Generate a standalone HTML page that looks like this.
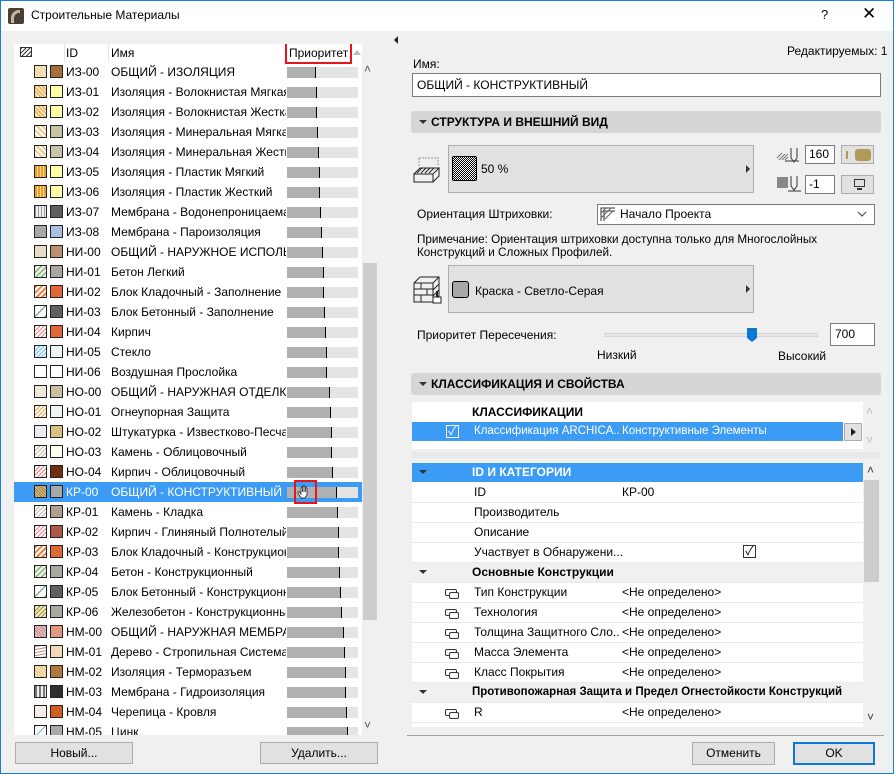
<!DOCTYPE html>
<html><head><meta charset="utf-8">
<style>
*{box-sizing:border-box;margin:0;padding:0}
body{width:894px;height:774px;overflow:hidden;background:#f0f0f0;font-family:"Liberation Sans","Noto Sans CJK SC",sans-serif;font-size:12px;color:#000;position:relative}
.abs{position:absolute}
#frame{position:absolute;left:0;top:0;width:894px;height:774px;border:1px solid #1a7fd4;pointer-events:none}
#title{position:absolute;left:0;top:0;width:894px;height:31px;background:#fff}
#list{position:absolute;left:14px;top:44px;width:348px;height:691px;background:#fff;overflow:hidden}
.r{position:absolute;left:0;width:348px;height:20px}
.r.sel{background:#3c9bf5;color:#fff}
.a,.b{position:absolute;top:3px;width:13px;height:13px;border:1px solid #222}
.a{left:20px}.b{left:36px}
.id{position:absolute;left:52px;top:3px}
.n{position:absolute;left:97px;top:3px;width:175px;white-space:nowrap;overflow:hidden}
.p{position:absolute;left:273px;top:5px;width:71px;height:11px;background:#e4e4e4}
.p u{position:absolute;left:0;top:0;height:11px;background:#b0b0b0;border-right:1px solid #000}
.btn{position:absolute;background:#e1e1e1;border:1px solid #adadad;text-align:center;line-height:20px}
.inp{position:absolute;background:#fff;border:1px solid #7a7a7a;padding-left:4px;line-height:19px}
.sec{position:absolute;left:411px;width:470px;height:22px;background:#d6d6d6;border-radius:3px;font-weight:bold;line-height:22px;padding-left:20px}
.sec:before{content:"";position:absolute;left:8px;top:9px;border-left:4px solid transparent;border-right:4px solid transparent;border-top:4px solid #333}
.pr{position:absolute;left:412px;width:451px;height:20px;background:#fff;border-bottom:1px solid #eaeaea;line-height:19px}
.pr .k{position:absolute;left:62px;white-space:nowrap}
.pr .v{position:absolute;left:210px}
.pr.g{background:#f0f0f0;font-weight:bold}
.pr.g:before{content:"";position:absolute;left:7px;top:7px;border-left:4px solid transparent;border-right:4px solid transparent;border-top:4px solid #333}
.lk{position:absolute;left:33px;top:6px;width:12px;height:7px;border:1.5px solid #333;border-radius:2px}
.lk:after{content:"";position:absolute;left:3px;top:2px;width:8px;height:5px;border:1.5px solid #333;border-radius:2px;background:#fff}
.cb{position:absolute;width:13px;height:13px;border:1px solid #333;background:#fff;font-size:12px;line-height:11px;text-align:center}
</style></head><body>
<div id="title">
 <div class="abs" style="left:8px;top:8px;width:16px;height:16px;background:#4a3f35;border-radius:2px"><div class="abs" style="left:3px;top:2px;width:9px;height:13px;border-left:3px solid #c8b898;border-top:3px solid #c8b898;border-radius:8px 0 0 0"></div></div>
 <div class="abs" style="left:31px;top:8px;font-size:12px">Строительные Материалы</div>
 <div class="abs" style="left:821px;top:7px;font-size:13px">?</div>
 <div class="abs" style="left:862px;top:4px;font-size:17px">✕</div>
</div>

<div id="list">
 <div class="abs" style="left:0;top:0;width:348px;height:18px;background:#fff"></div>
 <div class="abs" style="left:6px;top:3px;width:12px;height:10px;border:1px solid #333;background:repeating-linear-gradient(135deg,#333 0 1px,#fff 1px 3px)"></div>
 <div class="abs" style="left:52px;top:2px">ID</div>
 <div class="abs" style="left:97px;top:2px">Имя</div>
 <div class="abs" style="left:50px;top:0;width:1px;height:18px;background:#e5e5e5"></div>
 <div class="abs" style="left:94px;top:0;width:1px;height:18px;background:#e5e5e5"></div>
 <div class="abs" style="left:271px;top:-2px;width:67px;height:22px;border:2px solid #e8141c"></div>
 <div class="abs" style="left:275px;top:2px">Приоритет</div>
 <div class="abs" style="left:339px;top:6px;border-left:4px solid transparent;border-right:4px solid transparent;border-bottom:5px solid #bbb"></div>

 <div class="r" style="top:18px"><i class="a" style="background:repeating-linear-gradient(45deg,#f5c070 0 1px,#fff 1px 2px)"></i><i class="b" style="background:#a87038"></i><span class="id">ИЗ-00</span><span class="n">ОБЩИЙ - ИЗОЛЯЦИЯ</span><b class="p"><u style="width:29px"></u></b></div>
 <div class="r" style="top:38px"><i class="a" style="background:repeating-linear-gradient(45deg,#f0b860 0 2px,#fff 2px 3px)"></i><i class="b" style="background:#ffffa8"></i><span class="id">ИЗ-01</span><span class="n">Изоляция - Волокнистая Мягкая</span><b class="p"><u style="width:30px"></u></b></div>
 <div class="r" style="top:58px"><i class="a" style="background:repeating-linear-gradient(45deg,#f0b860 0 2px,#fff 2px 3px)"></i><i class="b" style="background:#ffffa8"></i><span class="id">ИЗ-02</span><span class="n">Изоляция - Волокнистая Жесткая</span><b class="p"><u style="width:30px"></u></b></div>
 <div class="r" style="top:78px"><i class="a" style="background:repeating-linear-gradient(45deg,#f0c890 0 2px,#fff 2px 4px)"></i><i class="b" style="background:#c8c4a8"></i><span class="id">ИЗ-03</span><span class="n">Изоляция - Минеральная Мягкая</span><b class="p"><u style="width:31px"></u></b></div>
 <div class="r" style="top:98px"><i class="a" style="background:repeating-linear-gradient(45deg,#f0c890 0 2px,#fff 2px 4px)"></i><i class="b" style="background:#c8c4a8"></i><span class="id">ИЗ-04</span><span class="n">Изоляция - Минеральная Жесткая</span><b class="p"><u style="width:32px"></u></b></div>
 <div class="r" style="top:118px"><i class="a" style="background:repeating-linear-gradient(90deg,#e8a030 0 2px,#f8d890 2px 3px)"></i><i class="b" style="background:#ffffa8"></i><span class="id">ИЗ-05</span><span class="n">Изоляция - Пластик Мягкий</span><b class="p"><u style="width:33px"></u></b></div>
 <div class="r" style="top:138px"><i class="a" style="background:repeating-linear-gradient(90deg,#e8a030 0 2px,#f8d890 2px 3px)"></i><i class="b" style="background:#ffffa8"></i><span class="id">ИЗ-06</span><span class="n">Изоляция - Пластик Жесткий</span><b class="p"><u style="width:33px"></u></b></div>
 <div class="r" style="top:158px"><i class="a" style="background:repeating-linear-gradient(90deg,#999 0 1px,#eee 1px 3px)"></i><i class="b" style="background:#606060"></i><span class="id">ИЗ-07</span><span class="n">Мембрана - Водонепроницаемая</span><b class="p"><u style="width:34px"></u></b></div>
 <div class="r" style="top:178px"><i class="a" style="background:#a8a8a8"></i><i class="b" style="background:#a8c0e0"></i><span class="id">ИЗ-08</span><span class="n">Мембрана - Пароизоляция</span><b class="p"><u style="width:35px"></u></b></div>
 <div class="r" style="top:198px"><i class="a" style="background:#e8dcc8"></i><i class="b" style="background:#b89070"></i><span class="id">НИ-00</span><span class="n">ОБЩИЙ - НАРУЖНОЕ ИСПОЛЬЗОВАНИЕ</span><b class="p"><u style="width:36px"></u></b></div>
 <div class="r" style="top:218px"><i class="a" style="background:repeating-linear-gradient(135deg,#70a060 0 1px,#e8f0e0 1px 4px)"></i><i class="b" style="background:#a8a8a0"></i><span class="id">НИ-01</span><span class="n">Бетон Легкий</span><b class="p"><u style="width:37px"></u></b></div>
 <div class="r" style="top:238px"><i class="a" style="background:repeating-linear-gradient(135deg,#f08040 0 2px,#fff 2px 4px)"></i><i class="b" style="background:#e06838"></i><span class="id">НИ-02</span><span class="n">Блок Кладочный - Заполнение</span><b class="p"><u style="width:37px"></u></b></div>
 <div class="r" style="top:258px"><i class="a" style="background:repeating-linear-gradient(135deg,#60a060 0 1px,#fff 1px 7px)"></i><i class="b" style="background:#606060"></i><span class="id">НИ-03</span><span class="n">Блок Бетонный - Заполнение</span><b class="p"><u style="width:38px"></u></b></div>
 <div class="r" style="top:278px"><i class="a" style="background:repeating-linear-gradient(135deg,#f08080 0 1px,#fff 1px 3px)"></i><i class="b" style="background:#e06838"></i><span class="id">НИ-04</span><span class="n">Кирпич</span><b class="p"><u style="width:39px"></u></b></div>
 <div class="r" style="top:298px"><i class="a" style="background:repeating-linear-gradient(135deg,#80c0f0 0 1px,#e8f4fc 1px 3px)"></i><i class="b" style="background:#f0f4f0"></i><span class="id">НИ-05</span><span class="n">Стекло</span><b class="p"><u style="width:40px"></u></b></div>
 <div class="r" style="top:318px"><i class="a" style="background:#fff"></i><i class="b" style="background:#fff"></i><span class="id">НИ-06</span><span class="n">Воздушная Прослойка</span><b class="p"><u style="width:40px"></u></b></div>
 <div class="r" style="top:338px"><i class="a" style="background:#eee8d8"></i><i class="b" style="background:#c8c0a0"></i><span class="id">НО-00</span><span class="n">ОБЩИЙ - НАРУЖНАЯ ОТДЕЛКА</span><b class="p"><u style="width:43px"></u></b></div>
 <div class="r" style="top:358px"><i class="a" style="background:repeating-linear-gradient(135deg,#f0a040 0 1px,#fff 1px 3px)"></i><i class="b" style="background:#f0f4f0"></i><span class="id">НО-01</span><span class="n">Огнеупорная Защита</span><b class="p"><u style="width:44px"></u></b></div>
 <div class="r" style="top:378px"><i class="a" style="background:#ecebf2"></i><i class="b" style="background:#d8c080"></i><span class="id">НО-02</span><span class="n">Штукатурка - Известково-Песчаная</span><b class="p"><u style="width:45px"></u></b></div>
 <div class="r" style="top:398px"><i class="a" style="background:repeating-linear-gradient(135deg,#c8b8a8 0 1px,#fff 1px 3px)"></i><i class="b" style="background:#fffff0"></i><span class="id">НО-03</span><span class="n">Камень - Облицовочный</span><b class="p"><u style="width:45px"></u></b></div>
 <div class="r" style="top:418px"><i class="a" style="background:repeating-linear-gradient(135deg,#f08080 0 1px,#fff 1px 3px)"></i><i class="b" style="background:#703010"></i><span class="id">НО-04</span><span class="n">Кирпич - Облицовочный</span><b class="p"><u style="width:46px"></u></b></div>
 <div class="r sel" style="top:438px"><i class="a" style="background:repeating-linear-gradient(45deg,#a08040 0 1px,#e0c890 1px 2px)"></i><i class="b" style="background:#a8a8a8"></i><span class="id">КР-00</span><span class="n">ОБЩИЙ - КОНСТРУКТИВНЫЙ</span><b class="p"><u style="width:50px"></u></b><div class="abs" style="left:280px;top:-2px;width:23px;height:24px;border:2px solid #e8141c"></div><svg class="abs" style="left:283px;top:2px" width="17" height="16" viewBox="0 0 17 16"><path d="M4 14L1 9c-.5-1 .8-1.8 1.5-1L4 10V4c0-1 1.5-1 1.5 0v4V2.5c0-1 1.5-1 1.5 0V8V3c0-1 1.5-1 1.5 0v5V4.5c0-1 1.5-1 1.5 0V11l-2 3z" fill="#fff" stroke="#333" stroke-width="0.9"/></svg></div>
 <div class="r" style="top:458px"><i class="a" style="background:repeating-linear-gradient(135deg,#c8b8a8 0 1px,#fff 1px 3px)"></i><i class="b" style="background:#b0a090"></i><span class="id">КР-01</span><span class="n">Камень - Кладка</span><b class="p"><u style="width:51px"></u></b></div>
 <div class="r" style="top:478px"><i class="a" style="background:repeating-linear-gradient(135deg,#f08080 0 1px,#fff 1px 3px)"></i><i class="b" style="background:#b05848"></i><span class="id">КР-02</span><span class="n">Кирпич - Глиняный Полнотелый</span><b class="p"><u style="width:52px"></u></b></div>
 <div class="r" style="top:498px"><i class="a" style="background:repeating-linear-gradient(135deg,#f08040 0 2px,#fff 2px 4px)"></i><i class="b" style="background:#e06838"></i><span class="id">КР-03</span><span class="n">Блок Кладочный - Конструкционный</span><b class="p"><u style="width:52px"></u></b></div>
 <div class="r" style="top:518px"><i class="a" style="background:repeating-linear-gradient(135deg,#70a060 0 1px,#e8f0e0 1px 4px)"></i><i class="b" style="background:#a8a8a0"></i><span class="id">КР-04</span><span class="n">Бетон - Конструкционный</span><b class="p"><u style="width:53px"></u></b></div>
 <div class="r" style="top:538px"><i class="a" style="background:repeating-linear-gradient(135deg,#60a060 0 1px,#fff 1px 7px)"></i><i class="b" style="background:#606060"></i><span class="id">КР-05</span><span class="n">Блок Бетонный - Конструкционный</span><b class="p"><u style="width:54px"></u></b></div>
 <div class="r" style="top:558px"><i class="a" style="background:repeating-linear-gradient(135deg,#a09030 0 1px,#f0ecc8 1px 3px)"></i><i class="b" style="background:#a8a8a0"></i><span class="id">КР-06</span><span class="n">Железобетон - Конструкционный</span><b class="p"><u style="width:55px"></u></b></div>
 <div class="r" style="top:578px"><i class="a" style="background:repeating-linear-gradient(45deg,#c08080 0 1px,#f0dcdc 1px 2px)"></i><i class="b" style="background:#e09880"></i><span class="id">НМ-00</span><span class="n">ОБЩИЙ - НАРУЖНАЯ МЕМБРАНА</span><b class="p"><u style="width:57px"></u></b></div>
 <div class="r" style="top:598px"><i class="a" style="background:repeating-linear-gradient(170deg,#c09080 0 1px,#fff 1px 3px)"></i><i class="b" style="background:#f0d8b8"></i><span class="id">НМ-01</span><span class="n">Дерево - Стропильная Система</span><b class="p"><u style="width:58px"></u></b></div>
 <div class="r" style="top:618px"><i class="a" style="background:repeating-linear-gradient(45deg,#f0b050 0 1px,#fff 1px 2px)"></i><i class="b" style="background:#b07840"></i><span class="id">НМ-02</span><span class="n">Изоляция - Терморазъем</span><b class="p"><u style="width:59px"></u></b></div>
 <div class="r" style="top:638px"><i class="a" style="background:repeating-linear-gradient(90deg,#777 0 2px,#eee 2px 4px)"></i><i class="b" style="background:#303030"></i><span class="id">НМ-03</span><span class="n">Мембрана - Гидроизоляция</span><b class="p"><u style="width:59px"></u></b></div>
 <div class="r" style="top:658px"><i class="a" style="background:#f8ece6"></i><i class="b" style="background:#d06020"></i><span class="id">НМ-04</span><span class="n">Черепица - Кровля</span><b class="p"><u style="width:60px"></u></b></div>
 <div class="r" style="top:678px"><i class="a" style="background:repeating-linear-gradient(135deg,#80b0e0 0 1px,#fff 1px 7px)"></i><i class="b" style="background:#a8a8a8"></i><span class="id">НМ-05</span><span class="n">Цинк</span><b class="p"><u style="width:61px"></u></b></div>
</div>
<!-- left scrollbar -->
<div class="abs" style="left:362px;top:62px;width:16px;height:673px;background:#f0f0f0"></div>
<div class="abs" style="left:363px;top:263px;width:14px;height:357px;background:#cdcdcd"></div>
<div class="abs" style="left:364px;top:62px;font-size:12px;color:#555">˄</div>
<div class="abs" style="left:364px;top:718px;font-size:12px;color:#555">˅</div>

<div class="btn" style="left:15px;top:742px;width:118px;height:22px">Новый...</div>
<div class="btn" style="left:260px;top:742px;width:118px;height:22px">Удалить...</div>

<div class="abs" style="left:394px;top:36px;border-top:4px solid transparent;border-bottom:4px solid transparent;border-right:4px solid #222"></div>

<!-- right panel -->
<div class="abs" style="left:787px;top:44px">Редактируемых: 1</div>
<div class="abs" style="left:413px;top:57px">Имя:</div>
<div class="inp" style="left:412px;top:73px;width:469px;height:24px;line-height:22px">ОБЩИЙ - КОНСТРУКТИВНЫЙ</div>

<div class="sec" style="top:111px">СТРУКТУРА И ВНЕШНИЙ ВИД</div>

<svg class="abs" style="left:413px;top:156px" width="28" height="28" viewBox="0 0 28 28"><path d="M6 2h19v8M6 2v8" stroke="#999" stroke-dasharray="2 1" fill="none"/><path d="M1 18l6-6h19l-6 6zM1 18v8h19v-8M20 26l6-6v-8" stroke="#222" fill="none"/><path d="M4 17l5-5M8 17l5-5M12 17l5-5M16 17l5-5" stroke="#222"/></svg>
<div class="btn" style="left:448px;top:145px;width:306px;height:48px"></div>
<div class="abs" style="left:452px;top:156px;width:25px;height:25px;border:1px solid #000;border-radius:2px;background:repeating-conic-gradient(#000 0 25%,#fff 0 50%) 0 0/2px 2px"></div>
<div class="abs" style="left:481px;top:162px">50 %</div>
<div class="abs" style="left:746px;top:165px;border-top:4px solid transparent;border-bottom:4px solid transparent;border-left:4px solid #333"></div>

<svg class="abs" style="left:776px;top:146px" width="26" height="20"><path d="M1 12l5-5M3 14l6-6M6 14l6-6M9 14l3-3" stroke="#777"/><path d="M15 2v10l3 4 3-4V2" stroke="#333" fill="none"/><path d="M9 15h14" stroke="#333"/></svg>
<div class="inp" style="left:805px;top:145px;width:30px;height:19px;padding-left:3px;line-height:17px">160</div>
<div class="btn" style="left:841px;top:145px;width:33px;height:19px"><div class="abs" style="left:4px;top:5px;width:2px;height:8px;background:#b09a50"></div><div class="abs" style="left:13px;top:3px;width:16px;height:12px;border-radius:3px;background:#b09a58"></div></div>
<div class="abs" style="left:777px;top:177px;width:11px;height:11px;background:#888"></div>
<svg class="abs" style="left:788px;top:174px" width="14" height="20"><path d="M3 2v10l3 4 3-4V2" stroke="#333" fill="none"/><path d="M0 17h13" stroke="#333"/></svg>
<div class="inp" style="left:805px;top:175px;width:30px;height:19px;padding-left:3px;line-height:17px">-1</div>
<div class="btn" style="left:841px;top:175px;width:33px;height:19px"><div class="abs" style="left:12px;top:3px;width:11px;height:8px;border:1.5px solid #333"></div><div class="abs" style="left:15px;top:12px;width:5px;height:2px;background:#333"></div></div>

<div class="abs" style="left:417px;top:207px">Ориентация Штриховки:</div>
<div class="inp" style="left:597px;top:204px;width:278px;height:21px;padding-left:22px">Начало Проекта</div>
<svg class="abs" style="left:600px;top:207px" width="16" height="15"><path d="M1 14V1h14M4 14V4h11" stroke="#333" fill="none"/><path d="M1 6l5-5M1 11l10-10M5 12l8-8" stroke="#666"/></svg>
<svg class="abs" style="left:857px;top:210px" width="10" height="8"><path d="M1 2l4 4 4-4" stroke="#444" fill="none"/></svg>
<div class="abs" style="left:417px;top:233px;line-height:13px;font-size:11.7px">Примечание: Ориентация штриховки доступна только для Многослойных<br>Конструкций и Сложных Профилей.</div>

<svg class="abs" style="left:413px;top:275px" width="30" height="30"><path d="M1 8l6-6h19v19l-6 6H1z M1 8h19v19 M20 8l6-6" stroke="#222" fill="none"/><path d="M1 14h19M1 20h19M8 8v6M14 14v6M8 20v7M26 9l-6 6M26 15l-6 6" stroke="#222"/><rect x="20" y="22" width="8" height="6" fill="#fff" stroke="#222"/><path d="M24 22v-6" stroke="#222" stroke-width="2"/></svg>
<div class="btn" style="left:448px;top:265px;width:306px;height:48px"></div>
<div class="abs" style="left:452px;top:281px;width:17px;height:17px;border:1px solid #000;border-radius:3px;background:#a8a8a8"></div>
<div class="abs" style="left:475px;top:284px">Краска - Светло-Серая</div>
<div class="abs" style="left:746px;top:285px;border-top:4px solid transparent;border-bottom:4px solid transparent;border-left:4px solid #333"></div>

<div class="abs" style="left:417px;top:328px">Приоритет Пересечения:</div>
<div class="abs" style="left:604px;top:333px;width:214px;height:4px;background:#e7e7e7;border:1px solid #d6d6d6"></div>
<svg class="abs" style="left:747px;top:328px" width="10" height="14"><path d="M0 0h10v10l-5 4-5-4z" fill="#0a78d7"/></svg>
<div class="inp" style="left:830px;top:323px;width:45px;height:23px;line-height:21px">700</div>
<div class="abs" style="left:597px;top:348px">Низкий</div>
<div class="abs" style="left:778px;top:349px">Высокий</div>

<div class="sec" style="top:373px">КЛАССИФИКАЦИЯ И СВОЙСТВА</div>

<div class="abs" style="left:412px;top:402px;width:451px;height:47px;background:#fff"></div>
<div class="abs" style="left:472px;top:405px;font-weight:bold">КЛАССИФИКАЦИИ</div>
<div class="abs" style="left:412px;top:422px;width:431px;height:19px;background:#3c9bf5;color:#fff">
 <div class="cb" style="left:34px;top:3px;background:transparent;border-color:#fff;color:#fff">✓</div>
 <div class="abs" style="left:62px;top:3px;width:146px;overflow:hidden;white-space:nowrap;font-size:11.5px">Классификация ARCHICA...</div>
 <div class="abs" style="left:210px;top:3px;font-size:11.5px">Конструктивные Элементы</div>
</div>
<div class="btn" style="left:844px;top:423px;width:18px;height:18px"><div class="abs" style="left:6px;top:4px;border-top:4px solid transparent;border-bottom:4px solid transparent;border-left:5px solid #222"></div></div>
<div class="abs" style="left:866px;top:404px;color:#bbb;font-size:12px">˄</div>
<div class="abs" style="left:866px;top:433px;color:#bbb;font-size:12px">˅</div>
<div class="abs" style="left:412px;top:452px;width:468px;height:6px;background:#e8e8e8"></div>

<div class="abs" style="left:412px;top:463px;width:451px;height:264px;background:#fff"></div>
<div class="abs" style="left:412px;top:463px;width:451px;height:19px;background:#3c9bf5;color:#fff;font-weight:bold;line-height:19px"><span class="abs" style="left:60px">ID И КАТЕГОРИИ</span><span class="abs" style="left:7px;top:7px;border-left:4px solid transparent;border-right:4px solid transparent;border-top:4px solid #333"></span></div>
<div class="pr" style="top:483px"><span class="k">ID</span><span class="v">КР-00</span></div>
<div class="pr" style="top:503px"><span class="k">Производитель</span></div>
<div class="pr" style="top:523px"><span class="k">Описание</span></div>
<div class="pr" style="top:543px"><span class="k">Участвует в Обнаружени...</span><div class="cb" style="left:331px;top:2px">✓</div></div>
<div class="pr g" style="top:563px"><span class="k" style="left:60px">Основные Конструкции</span></div>
<div class="pr" style="top:583px"><i class="lk"></i><span class="k">Тип Конструкции</span><span class="v">&lt;Не определено&gt;</span></div>
<div class="pr" style="top:603px"><i class="lk"></i><span class="k">Технология</span><span class="v">&lt;Не определено&gt;</span></div>
<div class="pr" style="top:623px"><i class="lk"></i><span class="k" style="width:146px;overflow:hidden">Толщина Защитного Сло...</span><span class="v">&lt;Не определено&gt;</span></div>
<div class="pr" style="top:643px"><i class="lk"></i><span class="k">Масса Элемента</span><span class="v">&lt;Не определено&gt;</span></div>
<div class="pr" style="top:663px"><i class="lk"></i><span class="k">Класс Покрытия</span><span class="v">&lt;Не определено&gt;</span></div>
<div class="pr g" style="top:683px"><span class="k" style="left:60px;font-size:11.5px">Противопожарная Защита и Предел Огнестойкости Конструкций</span></div>
<div class="pr" style="top:703px"><i class="lk"></i><span class="k">R</span><span class="v">&lt;Не определено&gt;</span></div>
<div class="abs" style="left:863px;top:463px;width:17px;height:264px;background:#f0f0f0"></div>
<div class="abs" style="left:864px;top:480px;width:15px;height:102px;background:#cdcdcd"></div>
<div class="abs" style="left:867px;top:463px;color:#333;font-size:12px">˄</div>
<div class="abs" style="left:867px;top:710px;color:#333;font-size:12px">˅</div>

<div class="abs" style="left:407px;top:735px;width:477px;height:1px;background:#a0a0a0"></div>
<div class="btn" style="left:692px;top:742px;width:83px;height:23px">Отменить</div>
<div class="btn" style="left:793px;top:742px;width:82px;height:23px;border:2px solid #0a78d7;line-height:19px">OK</div>

<div id="frame"></div>
</body></html>
